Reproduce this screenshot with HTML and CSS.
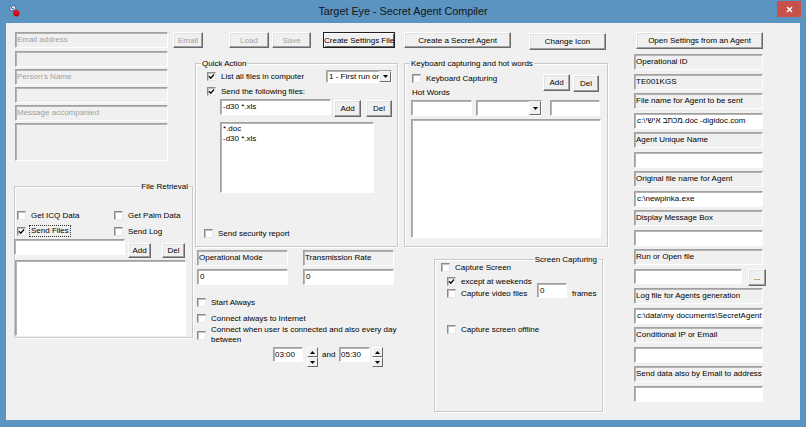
FILE: index.html
```html
<!DOCTYPE html>
<html lang="en">
<head>
<meta charset="utf-8">
<title>Target Eye - Secret Agent Compiler</title>
<link rel="stylesheet" href="styles.css">
</head>
<body>
<div class="window">
  <div class="titlebar">
    <div class="tb-left">
      <svg class="app-icon" width="11" height="12" viewBox="0 0 11 12">
        <path d="M0.5 1.5 L6 0.5 L7 5 L1.5 6 Z" fill="#e8eefa" stroke="#3d4f9e" stroke-width="0.8"/>
        <path d="M2 2.5 L5.5 4.5" stroke="#2a3b8f" stroke-width="1"/>
        <circle cx="7.3" cy="8.2" r="3.2" fill="#d3141c"/>
        <path d="M5.2 9.6 Q7.3 11.6 9.8 9.6" stroke="#8a0a10" fill="none" stroke-width="0.8"/>
      </svg>
    </div>
    <div class="title">Target Eye - Secret Agent Compiler</div>
    <div class="tb-right">
      <div class="close"><svg width="7" height="7" viewBox="0 0 7 7"><path d="M1 1L6 6M6 1L1 6" stroke="#fff" stroke-width="1.4"/></svg></div>
    </div>
  </div>
  <div class="client">
    <div class="main">
      <div class="top-row">
        <div class="lbox dis lc-box">Email address</div>
        <button class="btn dis b-email">Email</button>
        <button class="btn dis b-load">Load</button>
        <button class="btn dis b-save">Save</button>
        <button class="btn default b-settings">Create Settings File</button>
        <button class="btn b-agent">Create a Secret Agent</button>
        <button class="btn b-icon">Change Icon</button>
      </div>
      <div class="body">
        <div class="left-col">
          <div class="lbox dis lc-box"></div>
          <div class="lbox dis lc-box gap2">Person's Name</div>
          <div class="lbox dis lc-box gap2"></div>
          <div class="lbox dis lc-box gap2">Message accompanied</div>
          <div class="lbox dis lc-box gap2 lc-big"></div>
          <div class="group fr">
            <span class="cap cap-right">File Retrieval</span>
            <div class="fr-grid">
              <label class="chk"><span class="cb"></span>Get ICQ Data</label>
              <label class="chk"><span class="cb"></span>Get Palm Data</label>
              <label class="chk"><span class="cb"><svg width="7" height="7" viewBox="0 0 7 7"><path d="M1 3.3L2.8 5.2L6 1.5" fill="none" stroke="#000" stroke-width="1.3"/></svg></span><span class="focus">Send Files</span></label>
              <label class="chk"><span class="cb"></span>Send Log</label>
            </div>
            <div class="fr-input-row">
              <div class="tbox fr-input"></div>
              <button class="btn fr-add">Add</button>
              <button class="btn fr-del">Del</button>
            </div>
            <div class="list fr-list"></div>
          </div>
        </div>
        <div class="middle">
          <div class="groups-row">
            <div class="group qa">
              <span class="cap">Quick Action</span>
              <div class="qa-r1">
                <label class="chk qa-grow"><span class="cb"><svg width="7" height="7" viewBox="0 0 7 7"><path d="M1 3.3L2.8 5.2L6 1.5" fill="none" stroke="#000" stroke-width="1.3"/></svg></span>List all files in computer</label>
                <div class="combo qa-combo"><div class="combo-text">1 - First run on</div><div class="combo-btn"><svg width="5" height="3" viewBox="0 0 5 3"><path d="M0 0H5L2.5 3Z" fill="#000"/></svg></div></div>
              </div>
              <div class="qa-r2"><label class="chk"><span class="cb"><svg width="7" height="7" viewBox="0 0 7 7"><path d="M1 3.3L2.8 5.2L6 1.5" fill="none" stroke="#000" stroke-width="1.3"/></svg></span>Send the following files:</label></div>
              <div class="qa-r3">
                <div class="tbox qa-input">-d30 *.xls</div>
                <button class="btn qa-add">Add</button>
                <button class="btn qa-del">Del</button>
              </div>
              <div class="list qa-list"><div>*.doc</div><div>-d30 *.xls</div></div>
              <div class="qa-r4"><label class="chk"><span class="cb"></span>Send security report</label></div>
            </div>
            <div class="group kb">
              <span class="cap">Keyboard capturing and hot words</span>
              <div class="kb-r1">
                <div class="kb-left">
                  <label class="chk kb-chk"><span class="cb"></span>Keyboard Capturing</label>
                  <div class="kb-hot">Hot Words</div>
                </div>
                <button class="btn kb-add">Add</button>
                <button class="btn kb-del">Del</button>
              </div>
              <div class="kb-r2">
                <div class="tbox kb-in1"></div>
                <div class="combo kb-combo"><div class="combo-text"></div><div class="combo-btn"><svg width="5" height="3" viewBox="0 0 5 3"><path d="M0 0H5L2.5 3Z" fill="#000"/></svg></div></div>
                <div class="tbox kb-in3"></div>
              </div>
              <div class="list kb-list"></div>
            </div>
          </div>
          <div class="bottom-row">
            <div class="op">
              <div class="op-row">
                <div class="lbox op-box">Operational Mode</div>
                <div class="lbox op-box op-second">Transmission Rate</div>
              </div>
              <div class="op-row">
                <div class="tbox op-box">0</div>
                <div class="tbox op-box op-second">0</div>
              </div>
              <label class="chk op-c1"><span class="cb"></span>Start Always</label>
              <label class="chk op-c2"><span class="cb"></span>Connect always to Internet</label>
              <label class="chk op-c3"><span class="cb"></span><span class="two-line">Connect when user is connected and also every day<br>between</span></label>
              <div class="time-row">
                <div class="tbox time">03:00</div>
                <div class="spin">
                  <div class="spin-b"><svg width="5" height="3" viewBox="0 0 5 3"><path d="M0 3H5L2.5 0Z" fill="#000"/></svg></div>
                  <div class="spin-b"><svg width="5" height="3" viewBox="0 0 5 3"><path d="M0 0H5L2.5 3Z" fill="#000"/></svg></div>
                </div>
                <span class="and">and</span>
                <div class="tbox time time2">05:30</div>
                <div class="spin spin2">
                  <div class="spin-b"><svg width="5" height="3" viewBox="0 0 5 3"><path d="M0 3H5L2.5 0Z" fill="#000"/></svg></div>
                  <div class="spin-b"><svg width="5" height="3" viewBox="0 0 5 3"><path d="M0 0H5L2.5 3Z" fill="#000"/></svg></div>
                </div>
              </div>
            </div>
            <div class="group sc">
              <span class="cap cap-right">Screen Capturing</span>
              <label class="chk sc-r1"><span class="cb"></span>Capture Screen</label>
              <label class="chk sc-r2"><span class="cb"><svg width="7" height="7" viewBox="0 0 7 7"><path d="M1 3.3L2.8 5.2L6 1.5" fill="none" stroke="#000" stroke-width="1.3"/></svg></span>except at weekends</label>
              <div class="sc-r3">
                <label class="chk sc-video"><span class="cb"></span>Capture video files</label>
                <div class="tbox sc-frames">0</div>
                <span class="sc-frames-l">frames</span>
              </div>
              <label class="chk sc-r4"><span class="cb"></span>Capture screen offline</label>
            </div>
          </div>
        </div>
      </div>
    </div>
    <div class="right-col">
      <button class="btn open-btn">Open Settings from an Agent</button>
      <div class="rc-list">
        <div class="lbox">Operational ID</div>
        <div class="lbox">TE001KGS</div>
        <div class="lbox">File name for Agent to be sent</div>
        <div class="tbox">c:\מכתב אישי.doc -digidoc.com</div>
        <div class="lbox">Agent Unique Name</div>
        <div class="tbox"></div>
        <div class="lbox">Original file name for Agent</div>
        <div class="tbox">c:\newpinka.exe</div>
        <div class="lbox">Display Message Box</div>
        <div class="tbox"></div>
        <div class="lbox">Run or Open file</div>
        <div class="rc-run"><div class="tbox"></div><button class="btn">...</button></div>
        <div class="lbox">Log file for Agents generation</div>
        <div class="tbox">c:\data\my documents\SecretAgent\log</div>
        <div class="lbox">Conditional IP or Email</div>
        <div class="tbox"></div>
        <div class="lbox">Send data also by Email to address</div>
        <div class="tbox"></div>
      </div>
    </div>
  </div>
</div>
</body>
</html>
```

FILE: styles.css
```css
* { box-sizing: border-box; }
html, body { margin: 0; padding: 0; }
body {
  width: 806px;
  height: 427px;
  overflow: hidden;
  background: #5b93c1;
  font-family: "Liberation Sans", Arial, sans-serif;
  font-size: 8px;
  color: #000;
}
.window { width: 806px; height: 427px; background: #5b93c1; }
.titlebar { height: 23px; display: grid; grid-template-columns: 1fr auto 1fr; }
.tb-left { display: flex; align-items: flex-start; }
.app-icon { display: block; margin: 5px 0 0 9px; }
.title { font-size: 10.8px; line-height: 22px; color: #141414; white-space: nowrap; }
.tb-right { display: flex; justify-content: flex-end; align-items: flex-start; }
.close {
  width: 24px; height: 16px; margin: 1px 5px 0 0;
  background: #c9514c;
  display: flex; align-items: center; justify-content: center;
}
.close svg { display: block; }

.client {
  margin: 0 6px;
  width: 794px; height: 397px;
  background: #f0f0f0;
  padding: 9px 0 0 8px;
  display: flex; align-items: flex-start;
}
.main { width: 594px; display: flex; flex-direction: column; }
.top-row { height: 19px; display: flex; align-items: flex-start; }
.body { display: flex; align-items: flex-start; }
.left-col { width: 179px; display: flex; flex-direction: column; }
.middle { width: 413px; margin-left: 2px; display: flex; flex-direction: column; }
.right-col { width: 132px; margin-left: 26px; display: flex; flex-direction: column; }

/* sunken fields */
.lbox, .tbox, .list, .combo {
  border: 1px solid;
  border-color: #a0a0a0 #fff #fff #a0a0a0;
  box-shadow: inset 1px 1px 0 #b4b4b4;
  height: 16px;
  white-space: nowrap;
  overflow: hidden;
  flex: none;
}
.lbox { background: #f0f0f0; line-height: 11px; padding: 1px 0 0 1px; }
.tbox { background: #fff; line-height: 14px; padding: 0 0 0 2px; }
.list { background: #fff; }
.dis { color: #a0a0a0; }

/* buttons */
.btn {
  font: inherit; color: #000; margin: 0; padding: 0;
  height: 16px;
  background: #f0f0f0;
  border: 1px solid;
  border-color: #fff #696969 #696969 #fff;
  box-shadow: inset -1px -1px 0 #a0a0a0, inset 1px 1px 0 #e3e3e3;
  line-height: 13px;
  text-align: center;
  white-space: nowrap;
  flex: none;
}
.btn.dis { color: #a0a0a0; }
.btn.default { border-color: #202020; box-shadow: inset 1px 1px 0 #fff, inset -1px -1px 0 #696969; }

/* checkboxes */
.chk { display: flex; align-items: center; white-space: nowrap; flex: none; }
.cb {
  width: 9px; height: 9px; flex: none; margin-right: 5px;
  background: #fff;
  border: 1px solid;
  border-color: #8a8a8a #e6e6e6 #e6e6e6 #8a8a8a;
  box-shadow: inset 1px 1px 0 #c0c0c0;
  display: flex; align-items: center; justify-content: center;
}
.cb svg { display: block; }
.focus { border: 1px dotted #333; margin-left: -2px; padding: 0 1px; line-height: 10px; }

/* group boxes */
.group {
  position: relative; flex: none;
  border: 1px solid #c9c9c9;
  box-shadow: inset 1px 1px 0 #fff, 1px 1px 0 #fff;
}
.cap {
  position: absolute; top: -6px; left: 5px;
  line-height: 11px; padding: 0 1px;
  background: #f0f0f0; white-space: nowrap;
}
.cap-right { left: auto; right: 4px; }

/* combo + spin */
.combo { display: flex; background: #fff; padding: 0; }
.combo-text { flex: 1; overflow: hidden; line-height: 11px; padding-left: 2px; }
.combo-btn {
  width: 12px; flex: none; height: 100%;
  background: #f0f0f0;
  border: 1px solid; border-color: #f0f0f0 #696969 #696969 #fff;
  display: flex; align-items: center; justify-content: center;
}
.combo-btn svg, .spin-b svg { display: block; }
.spin { width: 11px; height: 20px; display: flex; flex-direction: column; flex: none; margin-left: 4px; }
.spin-b {
  flex: 1;
  background: #f0f0f0;
  border: 1px solid; border-color: #fff #696969 #696969 #fff;
  display: flex; align-items: center; justify-content: center;
}

/* top row */
.b-email { width: 30px; margin-left: 5px; }
.b-load { width: 40px; margin-left: 26px; }
.b-save { width: 39px; margin-left: 3px; }
.b-settings { width: 72px; margin-left: 12px; }
.b-agent { width: 107px; margin-left: 9px; }
.b-icon { width: 77px; height: 17px; margin: 1px 0 0 18px; }

/* left column */
.lc-box { width: 153px; margin-left: 1px; }
.gap2 { margin-top: 2px; }
.lc-big { height: 38px; }
.fr { width: 179px; height: 152px; margin-top: 25px; }
.fr .cap-right { right: 3px; }
.fr-grid { display: grid; grid-template-columns: 97px auto; grid-template-rows: 15px 16px; padding: 21px 0 0 2px; }
.fr-input-row { display: flex; align-items: flex-start; height: 19px; }
.fr-input { width: 111px; margin-left: -1px; }
.fr-add { width: 23px; height: 15px; margin: 4px 0 0 3px; }
.fr-del { width: 23px; height: 15px; margin: 4px 0 0 11px; }
.fr-list { width: 171px; height: 76px; margin-top: 2px; }

/* quick action */
.groups-row { display: flex; margin-top: 12px; }
.qa { width: 203px; height: 184px; }
.kb { width: 204px; height: 184px; margin-left: 6px; }
.qa-r1 { display: flex; align-items: center; height: 13px; margin-top: 6px; padding: 0 5px 0 11px; }
.qa-grow { flex: 1; }
.qa-combo { width: 66px; height: 13px; }
.qa-r2 { display: flex; align-items: center; height: 14px; margin-top: 1px; padding-left: 11px; }
.qa-r3 { display: flex; align-items: flex-start; height: 18px; margin-top: 1px; padding-left: 24px; }
.qa-input { width: 111px; }
.qa-add { width: 27px; height: 17px; margin: 1px 0 0 3px; }
.qa-del { width: 26px; height: 17px; margin: 1px 0 0 5px; }
.qa-list { width: 154px; height: 71px; margin: 5px 0 0 24px; padding: 1px 0 0 2px; line-height: 10px; }
.qa-r4 { display: flex; align-items: center; height: 14px; margin-top: 33px; padding-left: 8px; }

/* keyboard */
.kb-r1 { display: flex; align-items: flex-start; height: 25px; margin-top: 9px; padding: 0 8px 0 7px; }
.kb-left { display: flex; flex-direction: column; flex: 1; }
.kb-chk { height: 11px; }
.kb-hot { line-height: 11px; margin-top: 3px; }
.kb-add { width: 27px; height: 17px; margin-top: 1px; }
.kb-del { width: 26px; height: 17px; margin: 2px 0 0 3px; }
.kb-r2 { display: flex; margin-top: 2px; padding-left: 6px; }
.kb-in1 { width: 61px; }
.kb-combo { width: 66px; margin-left: 4px; }
.kb-combo .combo-text { line-height: 14px; }
.kb-in3 { width: 50px; margin-left: 8px; }
.kb-list { width: 190px; height: 119px; margin: 3px 0 0 6px; }

/* bottom area */
.bottom-row { display: flex; align-items: flex-start; }
.op { width: 203px; display: flex; flex-direction: column; }
.op-row { display: flex; margin-top: 3px; }
.op-box { width: 91px; margin-left: 2px; }
.op-second { margin-left: 15px; }
.op-c1 { height: 15px; margin-top: 10px; padding-left: 2px; }
.op-c2 { height: 16px; padding-left: 2px; }
.op-c3 { height: 20px; margin-top: -1px; padding-left: 2px; }
.two-line { line-height: 10px; }
.time-row { display: flex; align-items: flex-start; margin-top: 2px; padding-left: 78px; }
.time { width: 30px; height: 15px; line-height: 13px; padding-left: 1px; }
.and { margin-left: 4px; width: 17px; line-height: 15px; }
.time2 { width: 31px; }
.spin2 { margin-left: 2px; }

.sc { width: 169px; height: 153px; margin: 12px 0 0 36px; }
.sc-r1 { height: 12px; margin-top: 1px; padding-left: 6px; }
.sc-r2 { height: 12px; margin-top: 2px; padding-left: 12px; }
.sc-r3 { display: flex; align-items: flex-start; height: 16px; margin-top: -4px; padding-left: 12px; }
.sc-video { width: 90px; height: 11px; margin-top: 5px; }
.sc-frames { width: 30px; height: 15px; line-height: 13px; }
.sc-frames-l { margin: 5px 0 0 5px; line-height: 11px; }
.sc-r4 { height: 11px; margin-top: 25px; padding-left: 12px; }

/* right column */
.open-btn { margin-left: 2px; width: 127px; height: 17px; }
.rc-list { margin-top: 5px; display: flex; flex-direction: column; gap: 3.5px; }
.rc-list > .lbox, .rc-list > .tbox { width: 129px; }
.rc-run { display: flex; align-items: flex-start; height: 16px; }
.rc-run .tbox { width: 108px; height: 15px; line-height: 13px; }
.rc-run .btn { margin-left: 6px; width: 18px; height: 17px; }
```
